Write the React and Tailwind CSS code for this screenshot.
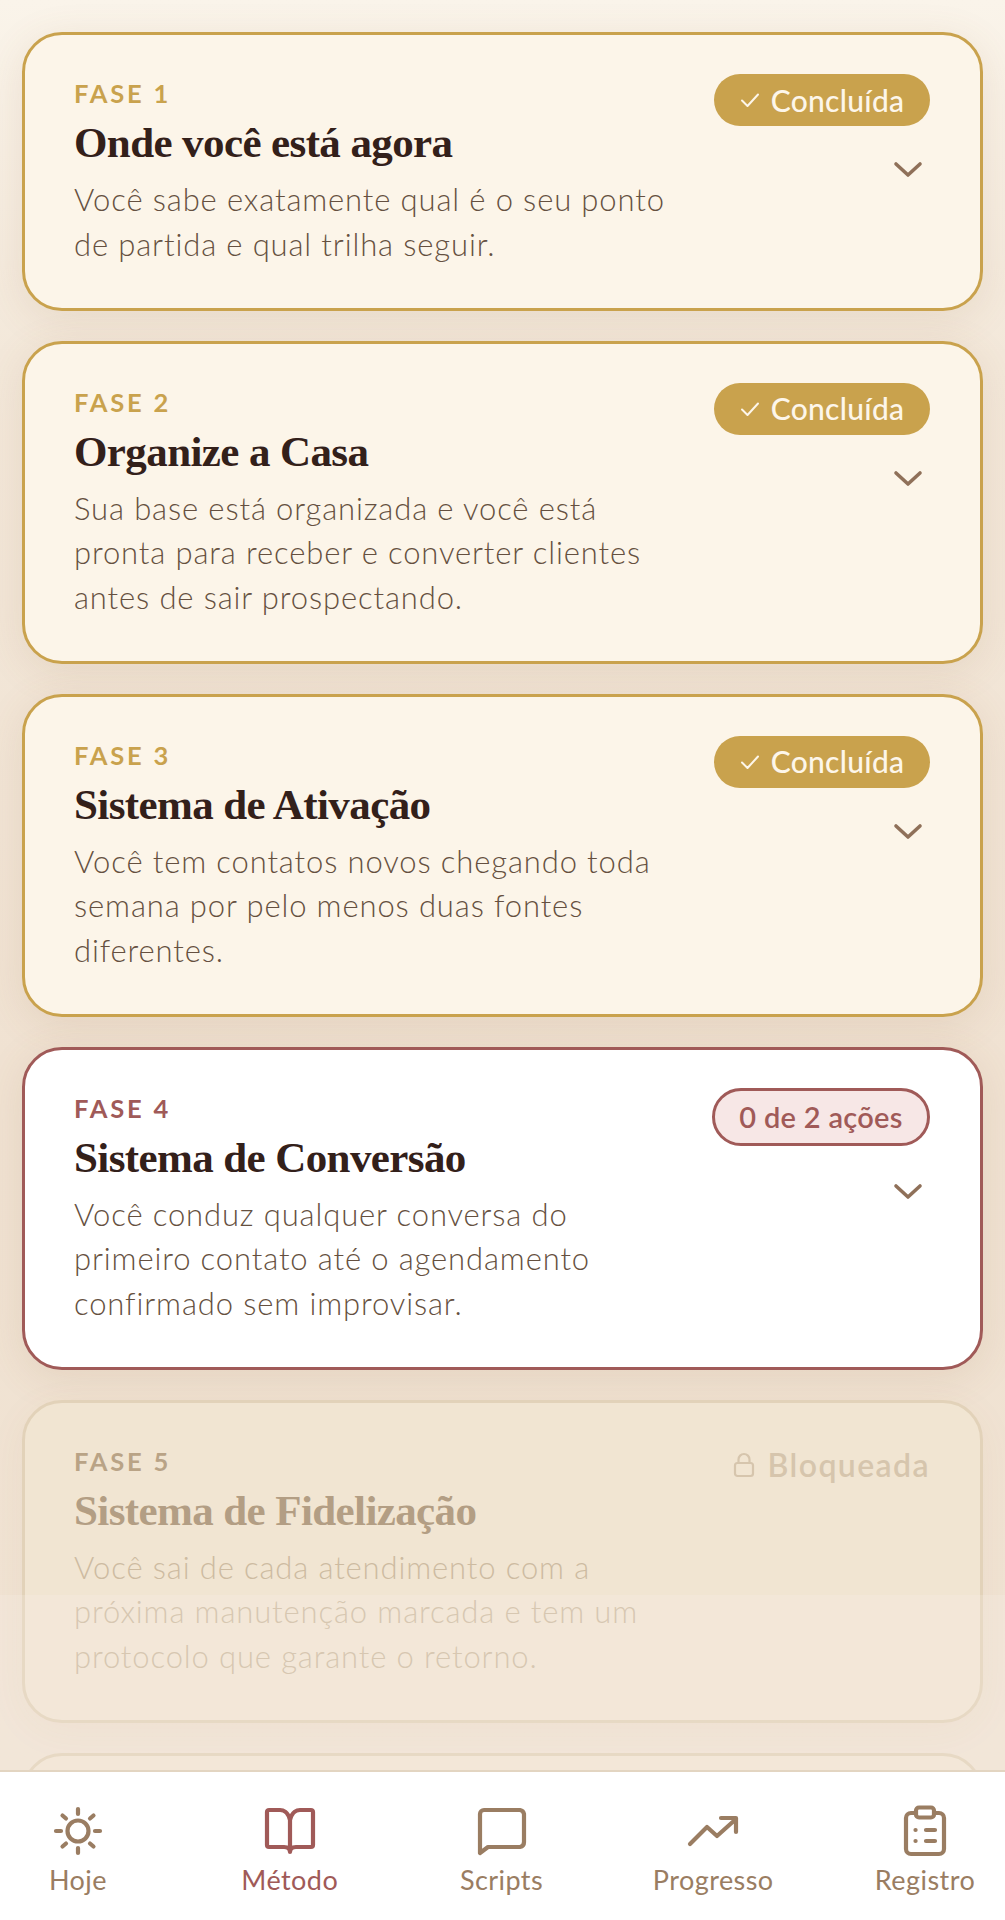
const SANS = "font-['Lato','Liberation_Sans',sans-serif]";
const SERIF = "font-['Liberation_Serif','DejaVu_Serif',serif]";

function Chevron() {
  return (
    <svg width="30" height="20" viewBox="0 0 30 20" fill="none" stroke="#8f7059" strokeWidth="3.6" strokeLinecap="round" strokeLinejoin="round">
      <path d="M3 4 L15 15 L27 4" />
    </svg>
  );
}

function Check() {
  return (
    <svg width="20" height="16" viewBox="0 0 20 16" fill="none" stroke="#fdf6ea" strokeWidth="2" strokeLinecap="round" strokeLinejoin="round">
      <path d="M2 8.5 L7.5 14 L18 2.5" />
    </svg>
  );
}

function Lock() {
  return (
    <svg width="22" height="26" viewBox="0 0 22 26" fill="none" stroke="#d6c5ad" strokeWidth="2.2" strokeLinecap="round" strokeLinejoin="round">
      <rect x="2" y="11" width="18" height="13" rx="2.5" />
      <path d="M5.5 11 V7.5 a5.5 5.5 0 0 1 11 0 V11" />
    </svg>
  );
}

function Card({ n, title, lines, state }) {
  const done = state === "done";
  const active = state === "active";
  const locked = state === "locked";
  return (
    <div className={
      "shrink-0 rounded-[40px] border-[3px] pl-[49px] pr-[50px] pt-[36px] pb-[41.5px] flex justify-between " +
      (done ? "bg-[#fcf5e9] border-[#c9a24d] shadow-[0_8px_40px_rgba(150,100,60,0.12)]" : "") +
      (active ? "bg-white border-[#a05a58] shadow-[0_8px_40px_rgba(150,100,60,0.12)]" : "") +
      (locked ? "border-[#e2d2b9] bg-[#f1e5d2] shadow-[0_8px_40px_rgba(150,100,60,0.05)]" : "")
    }>
      <div className="min-w-0 pt-[7px]">
        <div className={
          "text-[25.5px] leading-[30px] font-bold tracking-[0.11em] " + SANS + " " +
          (done ? "text-[#c9a24d]" : active ? "text-[#a05a58]" : "text-[#b9a386]")
        }>FASE {n}</div>
        <div className={
          "mt-[10px] text-[43px] leading-[50px] font-bold tracking-[-0.6px] whitespace-nowrap " + SERIF + " " +
          (locked ? "text-[#b39e84]" : "text-[#33201a]")
        }>{title}</div>
        <div className={
          "mt-[9px] text-[31px] leading-[44.5px] font-light tracking-[0.87px] whitespace-nowrap " + SANS + " " +
          (locked ? "text-[#cdbba1]" : "text-[#655040]")
        }>
          {lines.map((l) => <div key={l}>{l}</div>)}
        </div>
      </div>
      <div className="flex flex-col items-end shrink-0">
        {done && (
          <div className={"h-[52px] w-[216px] mt-[3px] rounded-full bg-[#c9a24d] text-[#fdf6ea] flex items-center justify-center gap-[11px] text-[30px] tracking-[0.3px] font-medium " + SANS}>
            <Check />
            <span>Concluída</span>
          </div>
        )}
        {active && (
          <div className={"h-[58px] w-[218px] mt-[2px] rounded-full border-[3px] border-[#a05a58] bg-[#f7e7e6] text-[#a05a58] flex items-center justify-center text-[29px] tracking-[0.3px] font-semibold " + SANS}>
            0 de 2 ações
          </div>
        )}
        {locked && (
          <div className={"h-[52px] text-[#d6c5ad] flex items-center gap-[13px] text-[32px] tracking-[1.4px] font-semibold " + SANS}>
            <Lock />
            <span>Bloqueada</span>
          </div>
        )}
        {!locked && <div className={(active ? "mt-[36px]" : "mt-[34px]") + " mr-[7px]"}><Chevron /></div>}
      </div>
    </div>
  );
}

function NavItem({ icon, label, on }) {
  return (
    <div className={"w-[134px] flex flex-col items-center " + (on ? "text-[#a05a58]" : "text-[#9a7d62]")}>
      <div className="w-[56px] h-[56px]">{icon}</div>
      <div className={"mt-[5px] text-[27px] leading-[32px] tracking-[0.45px] whitespace-nowrap " + SANS}>{label}</div>
    </div>
  );
}

const svgProps = {
  width: 56, height: 56, viewBox: "0 0 56 56", fill: "none", stroke: "currentColor",
  strokeWidth: 4.2, strokeLinecap: "round", strokeLinejoin: "round",
};

const SunIcon = (
  <svg {...svgProps}>
    <circle cx="28" cy="28" r="10.5" />
    <path d="M28 6 V11 M28 45 V50 M6 28 H11 M45 28 H50 M12.5 12.5 L16 15.5 M40 40.5 L43.5 43.5 M43.5 12.5 L40 15.5 M16 40.5 L12.5 43.5" />
  </svg>
);
const BookIcon = (
  <svg {...svgProps}>
    <path d="M28 17 C26 9 21 7 18 7 H7 a2 2 0 0 0 -2 2 V42 a2 2 0 0 0 2 2 H22 C26 44 28 46 28 49 C28 46 30 44 34 44 H49 a2 2 0 0 0 2 -2 V9 a2 2 0 0 0 -2 -2 H38 C35 7 30 9 28 17 Z M28 17 V49" />
  </svg>
);
const ChatIcon = (
  <svg {...svgProps}>
    <path d="M6 50 V11 a4 4 0 0 1 4 -4 H46 a5 5 0 0 1 4 4 V39 a5 5 0 0 1 -4 5 H14 Z" />
  </svg>
);
const TrendIcon = (
  <svg {...svgProps}>
    <path d="M5 41 L22 24 L32 33 L51 16 M36 15 H51 V29" />
  </svg>
);
const ClipIcon = (
  <svg {...svgProps}>
    <path d="M19 10 H14 a5 5 0 0 0 -5 5 V46 a5 5 0 0 0 5 5 H42 a5 5 0 0 0 5 -5 V15 a5 5 0 0 0 -5 -5 H37" />
    <rect x="19" y="4.5" width="18" height="10" rx="3" />
    <path d="M29 27 H38 M29 38 H38 M18.5 27 H18.6 M18.5 38 H18.6" />
  </svg>
);

export default function App() {
  return (
    <div className="relative w-[1005px] h-[1920px] overflow-hidden flex flex-col bg-[#f6eee2]">
      <div className="flex-1 min-h-0 overflow-hidden px-[22px] pt-[32px] flex flex-col gap-[30px] bg-[linear-gradient(180deg,#faf4ea_0%,#f3e8da_20%,#f0e2d2_60%,#f0e3d3_100%)]">
        <Card n={1} state="done" title="Onde você está agora" lines={["Você sabe exatamente qual é o seu ponto", "de partida e qual trilha seguir."]} />
        <Card n={2} state="done" title="Organize a Casa" lines={["Sua base está organizada e você está", "pronta para receber e converter clientes", "antes de sair prospectando."]} />
        <Card n={3} state="done" title="Sistema de Ativação" lines={["Você tem contatos novos chegando toda", "semana por pelo menos duas fontes", "diferentes."]} />
        <Card n={4} state="active" title="Sistema de Conversão" lines={["Você conduz qualquer conversa do", "primeiro contato até o agendamento", "confirmado sem improvisar."]} />
        <Card n={5} state="locked" title="Sistema de Fidelização" lines={["Você sai de cada atendimento com a", "próxima manutenção marcada e tem um", "protocolo que garante o retorno."]} />
        <div className="shrink-0 h-[200px] rounded-[40px] border-[3px] border-[#e2d2b9] bg-[#f1e5d2]" />
      </div>
      <div className="absolute left-0 right-0 top-[1595px] h-[175px] bg-[rgba(252,243,235,0.22)] pointer-events-none" />
      <nav className="relative shrink-0 h-[150px] bg-white border-t-[2px] border-[#e3d5c1] pl-[11px] pr-[13px] pt-[31px] flex justify-between items-start">
        <NavItem icon={SunIcon} label="Hoje" />
        <NavItem icon={BookIcon} label="Método" on />
        <NavItem icon={ChatIcon} label="Scripts" />
        <NavItem icon={TrendIcon} label="Progresso" />
        <NavItem icon={ClipIcon} label="Registro" />
      </nav>
    </div>
  );
}
